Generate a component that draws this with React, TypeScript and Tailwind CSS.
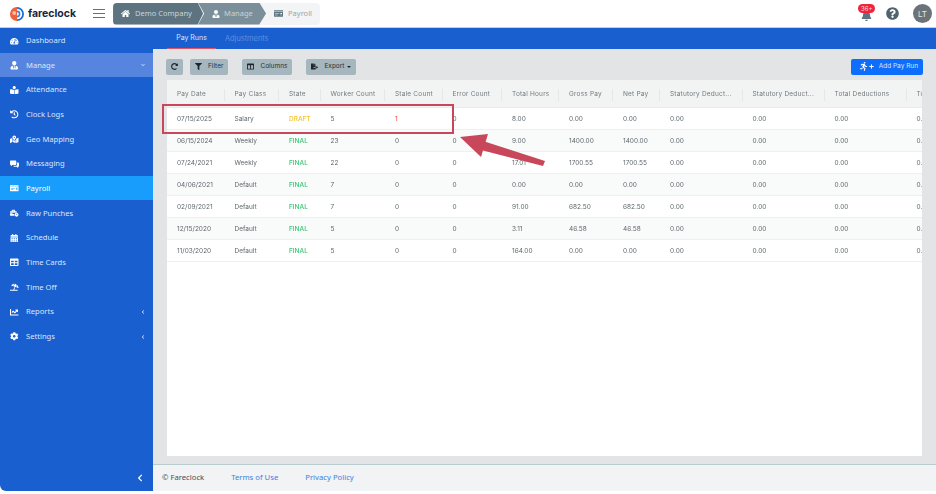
import type { FC, ReactNode } from 'react'
import {
  FaBell,
  FaBusinessTime,
  FaCalendarAlt,
  FaChartLine,
  FaChevronDown,
  FaChevronLeft,
  FaCog,
  FaColumns,
  FaFileExport,
  FaFilter,
  FaHistory,
  FaHome,
  FaMapMarkedAlt,
  FaMoneyCheck,
  FaPlus,
  FaQuestionCircle,
  FaRedoAlt,
  FaRunning,
  FaTable,
  FaTachometerAlt,
  FaUmbrellaBeach,
  FaUserTie,
  FaBookReader,
} from 'react-icons/fa'

const sans = "font-['Noto_Sans','Open_Sans',sans-serif]"
const inter = "font-['Inter','Roboto',sans-serif]"

const Bubbles: FC = () => (
  <svg width="10" height="9" viewBox="0 0 10 9" fill="currentColor">
    <path d="M0 .8C0 .4.4 0 .8 0h5.4c.4 0 .8.4.8.8v3.4c0 .4-.4.8-.8.8H2.6L1 6.4V5H.8C.4 5 0 4.6 0 4.2Z" />
    <path d="M7.8 2.4h1.4c.4 0 .8.4.8.8v3c0 .4-.4.8-.8.8H9v1.4L7.4 7H4.6c-.4 0-.8-.3-.8-.8v-.4h2.6c.8 0 1.4-.6 1.4-1.4Z" />
  </svg>
)

const menu = [
  { label: 'Dashboard', icon: <FaTachometerAlt /> },
  { label: 'Manage', icon: <FaUserTie />, open: true },
  { label: 'Attendance', icon: <FaBookReader /> },
  { label: 'Clock Logs', icon: <FaHistory /> },
  { label: 'Geo Mapping', icon: <FaMapMarkedAlt /> },
  { label: 'Messaging', icon: <Bubbles /> },
  { label: 'Payroll', icon: <FaMoneyCheck />, active: true },
  { label: 'Raw Punches', icon: <FaBusinessTime /> },
  { label: 'Schedule', icon: <FaCalendarAlt /> },
  { label: 'Time Cards', icon: <FaTable /> },
  { label: 'Time Off', icon: <FaUmbrellaBeach /> },
  { label: 'Reports', icon: <FaChartLine />, sub: true },
  { label: 'Settings', icon: <FaCog />, sub: true },
]

const headers = [
  'Pay Date',
  'Pay Class',
  'State',
  'Worker Count',
  'Stale Count',
  'Error Count',
  'Total Hours',
  'Gross Pay',
  'Net Pay',
  'Statutory Deduct...',
  'Statutory Deduct...',
  'Total Deductions',
  'Total Pay',
]

const rows = [
  ['07/15/2025', 'Salary', 'DRAFT', '5', '1', '0', '8.00', '0.00', '0.00', '0.00', '0.00', '0.00', '0.00'],
  ['06/15/2024', 'Weekly', 'FINAL', '23', '0', '0', '9.00', '1400.00', '1400.00', '0.00', '0.00', '0.00', '0.00'],
  ['07/24/2021', 'Weekly', 'FINAL', '22', '0', '0', '17.01', '1700.55', '1700.55', '0.00', '0.00', '0.00', '0.00'],
  ['04/06/2021', 'Default', 'FINAL', '7', '0', '0', '0.00', '0.00', '0.00', '0.00', '0.00', '0.00', '0.00'],
  ['02/09/2021', 'Default', 'FINAL', '7', '0', '0', '91.00', '682.50', '682.50', '0.00', '0.00', '0.00', '0.00'],
  ['12/15/2020', 'Default', 'FINAL', '5', '0', '0', '3.11', '46.58', '46.58', '0.00', '0.00', '0.00', '0.00'],
  ['11/03/2020', 'Default', 'FINAL', '5', '0', '0', '164.00', '0.00', '0.00', '0.00', '0.00', '0.00', '0.00'],
]

const columns = 'grid grid-cols-[57.5px_54.5px_41.5px_64.5px_57.5px_59.5px_57px_54px_47px_82.5px_82px_82px_60px]'

const Logo: FC = () => (
  <svg width="16" height="16" viewBox="0 0 16 16" className="flex-none">
    <path d="M8 1a7 7 0 0 0 0 14Z" fill="#f0603a" />
    <circle cx="5.2" cy="7" r="1.9" fill="#f9c0a8" />
    <path d="M8 1a7 7 0 0 1 0 14v-1.8A5.2 5.2 0 0 0 8 2.8Z" fill="#1f6fd6" />
    <path d="M8 4.6a3.4 3.4 0 0 1 0 6.8V9.8a1.8 1.8 0 0 0 0-3.6Z" fill="#2f8ae8" />
  </svg>
)

const Hamburger: FC = () => (
  <div className="ml-[17px] mr-[8px] flex w-[12px] flex-col gap-[3px]">
    <span className="h-[1px] bg-[#5d7380]" />
    <span className="h-[1px] bg-[#5d7380]" />
    <span className="h-[1px] bg-[#5d7380]" />
  </div>
)

const Crumbs: FC = () => (
  <div className={`${sans} flex h-[22px] w-[207px] items-stretch whitespace-nowrap rounded-sm bg-[#f3f4f5] text-[7.5px] text-[#c9d3d8]`}>
    <div className="flex w-[90px] items-center gap-[5px] rounded-l-sm bg-[#5d7380] pl-[8px] [clip-path:polygon(0_0,94%_0,100%_50%,94%_100%,0_100%)]">
      <FaHome className="flex-none text-[9px] text-white" />
      <span>Demo Company</span>
    </div>
    <div className="-ml-[5px] flex w-[68px] items-center gap-[4px] bg-[#7b8f9a] pl-[14px] [clip-path:polygon(0_0,90%_0,100%_50%,90%_100%,0_100%,9%_50%)]">
      <FaUserTie className="flex-none text-[8px] text-white" />
      <span>Manage</span>
    </div>
    <div className="flex items-center gap-[5px] pl-[8px] text-[#9aa5ab]">
      <FaMoneyCheck className="flex-none text-[9px] text-[#5d7380]" />
      <span>Payroll</span>
    </div>
  </div>
)

const Header: FC = () => (
  <header className="flex h-[28px] flex-none items-center border-b border-[#b9d3ee] bg-white pl-[9px] pr-[4px]">
    <Logo />
    <span className={`${inter} ml-[3px] text-[10.5px] font-bold text-[#17263f]`}>fareclock</span>
    <Hamburger />
    <Crumbs />
    <div className="ml-auto flex items-center">
      <div className="relative mt-[4px]">
        <FaBell className="text-[11px] text-[#5d7380]" />
        <span className={`${inter} absolute -left-[3px] -top-[6px] rounded-full bg-[#f0243c] px-[3px] text-[6px] leading-[9px] text-[#ffd9de]`}>
          36+
        </span>
      </div>
      <FaQuestionCircle className="ml-[14px] text-[13px] text-[#50646f]" />
      <div className={`${inter} ml-[14px] flex size-[19px] items-center justify-center rounded-full bg-[#6c7378] text-[8px] text-[#e4e6e8]`}>LT</div>
    </div>
  </header>
)

const Sidebar: FC = () => (
  <aside className={`${sans} flex w-[153px] flex-none flex-col rounded-bl-md bg-[#1a5fd0] text-[7.6px] text-[#dbe6f8]`}>
    {menu.map(item => (
      <div
        key={item.label}
        className={`flex h-[24.65px] items-center pl-[10px] pr-[8px] pt-[1px] ${item.active ? 'bg-[#189dfd] text-white' : item.open ? 'bg-[#5585de]' : ''}`}
      >
        <span className="flex w-[9px] justify-center text-[8.5px] text-white">{item.icon}</span>
        <span className="ml-[7px]">{item.label}</span>
        {item.open && <FaChevronDown className="ml-auto text-[4px]" />}
        {item.sub && <FaChevronLeft className="ml-auto text-[4px]" />}
      </div>
    ))}
    <div className="mt-auto flex h-[27px] items-center justify-end pr-[9px]">
      <FaChevronLeft className="text-[8px] text-white" />
    </div>
  </aside>
)

const ToolButton: FC<{ icon: ReactNode; label?: string; caret?: boolean }> = ({ icon, label, caret }) => (
  <button className={`${inter} flex h-[16px] items-center gap-[6px] rounded-[2px] bg-[#a5b6bf] px-[5px] text-[6.5px] text-[#26323a]`}>
    <span className="text-[7px] text-[#1c262c]">{icon}</span>
    {label}
    {caret && <span className="-ml-[3px] border-x-[2px] border-t-[2px] border-x-transparent border-t-[#1c262c]" />}
  </button>
)

const stateColor = (state: string) => (state === 'DRAFT' ? 'text-[#f4c22b] font-medium' : 'text-[#35c46f] font-medium')

const Table: FC = () => (
  <div className={`${inter} mx-[14px] min-h-0 flex-1 overflow-hidden bg-white text-[6.5px] text-[#5f676c] will-change-transform`}>
    <div className={`${columns} h-[28px] items-center border-b border-[#e9ecec] bg-[#f2f4f4] pt-[3px] tracking-[0.2px] text-[#71797d]`}>
      {headers.map((h, i) => (
        <div key={i} className="flex h-[12px] items-center overflow-hidden whitespace-nowrap border-r border-[#e5e8e8] pl-[10px] last:border-r-0">
          {h}
        </div>
      ))}
    </div>
    {rows.map((row, r) => (
      <div key={r} className={`${columns} h-[22px] items-center border-b border-[#eeefef] pt-[3px] ${r % 2 === 1 ? 'bg-[#f9fafa]' : 'bg-white'}`}>
        {row.map((cell, c) => (
          <div key={c} className={`overflow-hidden whitespace-nowrap pl-[10px] ${c === 2 ? stateColor(cell) : ''} ${c === 4 && cell === '1' ? 'text-[#f0402f]' : ''}`}>
            {cell}
          </div>
        ))}
      </div>
    ))}
  </div>
)

const Main: FC = () => (
  <main className="flex min-w-0 flex-1 flex-col">
    <nav className={`${inter} flex h-[21px] flex-none items-stretch bg-[#1a5fd0] pl-[14px] pt-[1px] text-[7px]`}>
      <div className="flex w-[49px] items-center justify-center border-b border-[#e0566a] text-[#dbe6f8]">Pay Runs</div>
      <div className="ml-[9px] flex items-center text-[7.4px] text-[#5b8ee0]">Adjustments</div>
    </nav>
    <div className="flex min-h-0 flex-1 flex-col bg-[#e2e4e6] pb-[8px]">
      <div className="flex h-[31px] flex-none items-center px-[13px] pt-[4px]">
        <ToolButton icon={<FaRedoAlt />} />
        <div className="ml-[7px]">
          <ToolButton icon={<FaFilter />} label="Filter" />
        </div>
        <div className="ml-[14px]">
          <ToolButton icon={<FaColumns />} label="Columns" />
        </div>
        <div className="ml-[14px]">
          <ToolButton icon={<FaFileExport />} label="Export" caret />
        </div>
        <button className={`${inter} ml-auto flex h-[16px] w-[72px] items-center justify-end gap-[5px] rounded-[2px] bg-[#0d6efd] pr-[5px] text-[6.5px] text-[#dbe6f8]`}>
          <span className="flex items-center gap-[1px] text-white">
            <FaRunning className="text-[9px]" />
            <FaPlus className="text-[5px]" />
          </span>
          Add Pay Run
        </button>
      </div>
      <Table />
    </div>
    <footer className={`${sans} flex h-[27px] flex-none items-center border-t border-[#b9cdd0] bg-[#f1f3f5] pl-[9px] text-[7.7px] text-[#4a4f53]`}>
      © Fareclock
      <span className="ml-[27px] text-[#3f7fe0]">Terms of Use</span>
      <span className="ml-[27px] text-[#3f7fe0]">Privacy Policy</span>
    </footer>
  </main>
)

const App: FC = () => (
  <div className="relative flex h-[491px] w-[936px] flex-col overflow-hidden bg-white">
    <Header />
    <div className="flex min-h-0 flex-1">
      <Sidebar />
      <Main />
    </div>
    {/* annotation drawn on top of the screenshot */}
    <div className="absolute left-[162px] top-[104px] h-[30px] w-[292px] border-2 border-[#c8475a]" />
    <svg className="absolute left-[455px] top-[130px]" width="95" height="40" viewBox="0 0 95 40">
      <path d="M5 7 33 4 26 27Z" fill="#c8475a" />
      <path d="M28 11 90 31 88 36 26 20Z" fill="#c8475a" />
    </svg>
  </div>
)

export default App
